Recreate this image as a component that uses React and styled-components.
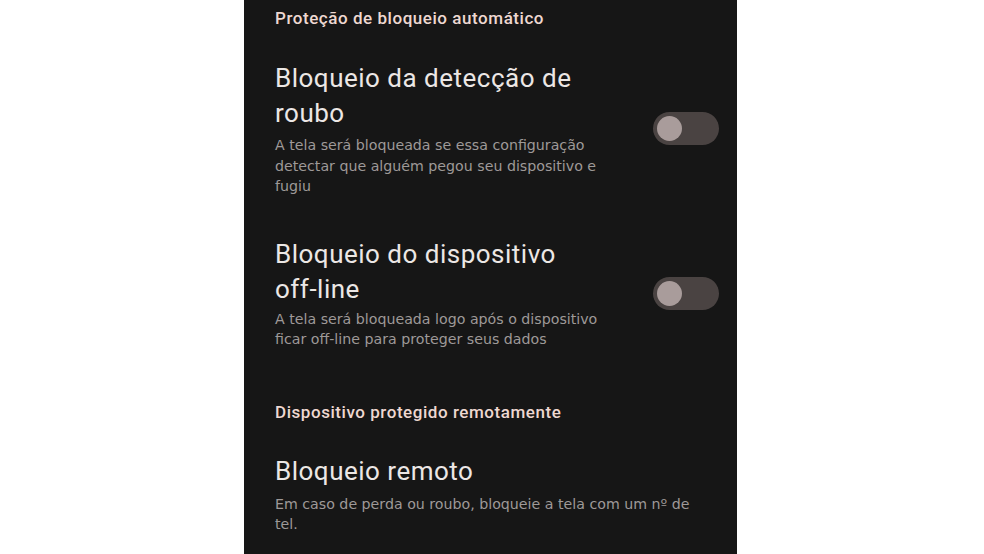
import React from 'react';
import styled, { createGlobalStyle } from 'styled-components';

const GlobalStyle = createGlobalStyle`
  html, body {
    margin: 0;
    padding: 0;
    background: #ffffff;
  }
  body {
    font-family: Roboto, "Liberation Sans", sans-serif;
  }
`;

const Page = styled.div`
  width: 984px;
  height: 554px;
  overflow: hidden;
  display: flex;
`;

const Panel = styled.div`
  margin-left: 244px;
  width: 493px;
  height: 554px;
  background: #161616;
  padding: 8px 18px 0 31px;
  box-sizing: border-box;
  display: flex;
  flex-direction: column;
`;

const SectionTitle = styled.div`
  font-size: 17px;
  line-height: 20px;
  font-weight: 500;
  letter-spacing: 0.55px;
  color: #eed8d1;
  margin-top: ${(p) => p.$top || 0}px;
`;

const Row = styled.div`
  display: flex;
  align-items: center;
  margin-top: ${(p) => p.$top || 0}px;
`;

const TextCol = styled.div`
  flex: 1;
  max-width: ${(p) => p.$max || 444}px;
  display: flex;
  flex-direction: column;
  gap: ${(p) => p.$gap || 4}px;
`;

const ItemTitle = styled.div`
  max-width: 320px;
  font-size: 26px;
  line-height: 35px;
  letter-spacing: 0.5px;
  color: #ece7e5;
`;

const ItemDesc = styled.div`
  font-family: "DejaVu Sans", Roboto, sans-serif;
  font-size: 14.2px;
  line-height: 20.5px;
  color: #9e9998;
`;

const Track = styled.div`
  flex: none;
  width: 66px;
  height: 33px;
  border-radius: 17px;
  background: #4a4342;
  display: flex;
  align-items: center;
  padding-left: 4px;
  box-sizing: border-box;
  margin-left: auto;
`;

const Thumb = styled.div`
  width: 25px;
  height: 25px;
  border-radius: 50%;
  background: #a99c9b;
`;

function Toggle() {
  return (
    <Track>
      <Thumb />
    </Track>
  );
}

export default function App() {
  return (
    <Page>
      <GlobalStyle />
      <Panel>
        <SectionTitle>Proteção de bloqueio automático</SectionTitle>

        <Row $top={33}>
          <TextCol $max={352}>
            <ItemTitle>Bloqueio da detecção de roubo</ItemTitle>
            <ItemDesc>
              A tela será bloqueada se essa configuração detectar que alguém pegou seu dispositivo e fugiu
            </ItemDesc>
          </TextCol>
          <Toggle />
        </Row>

        <Row $top={40}>
          <TextCol $max={352} $gap={2}>
            <ItemTitle>Bloqueio do dispositivo off-line</ItemTitle>
            <ItemDesc>A tela será bloqueada logo após o dispositivo ficar off-line para proteger seus dados</ItemDesc>
          </TextCol>
          <Toggle />
        </Row>

        <SectionTitle $top={52}>Dispositivo protegido remotamente</SectionTitle>

        <Row $top={32}>
          <TextCol $max={420} $gap={5}>
            <ItemTitle>Bloqueio remoto</ItemTitle>
            <ItemDesc>Em caso de perda ou roubo, bloqueie a tela com um nº de tel.</ItemDesc>
          </TextCol>
        </Row>
      </Panel>
    </Page>
  );
}
